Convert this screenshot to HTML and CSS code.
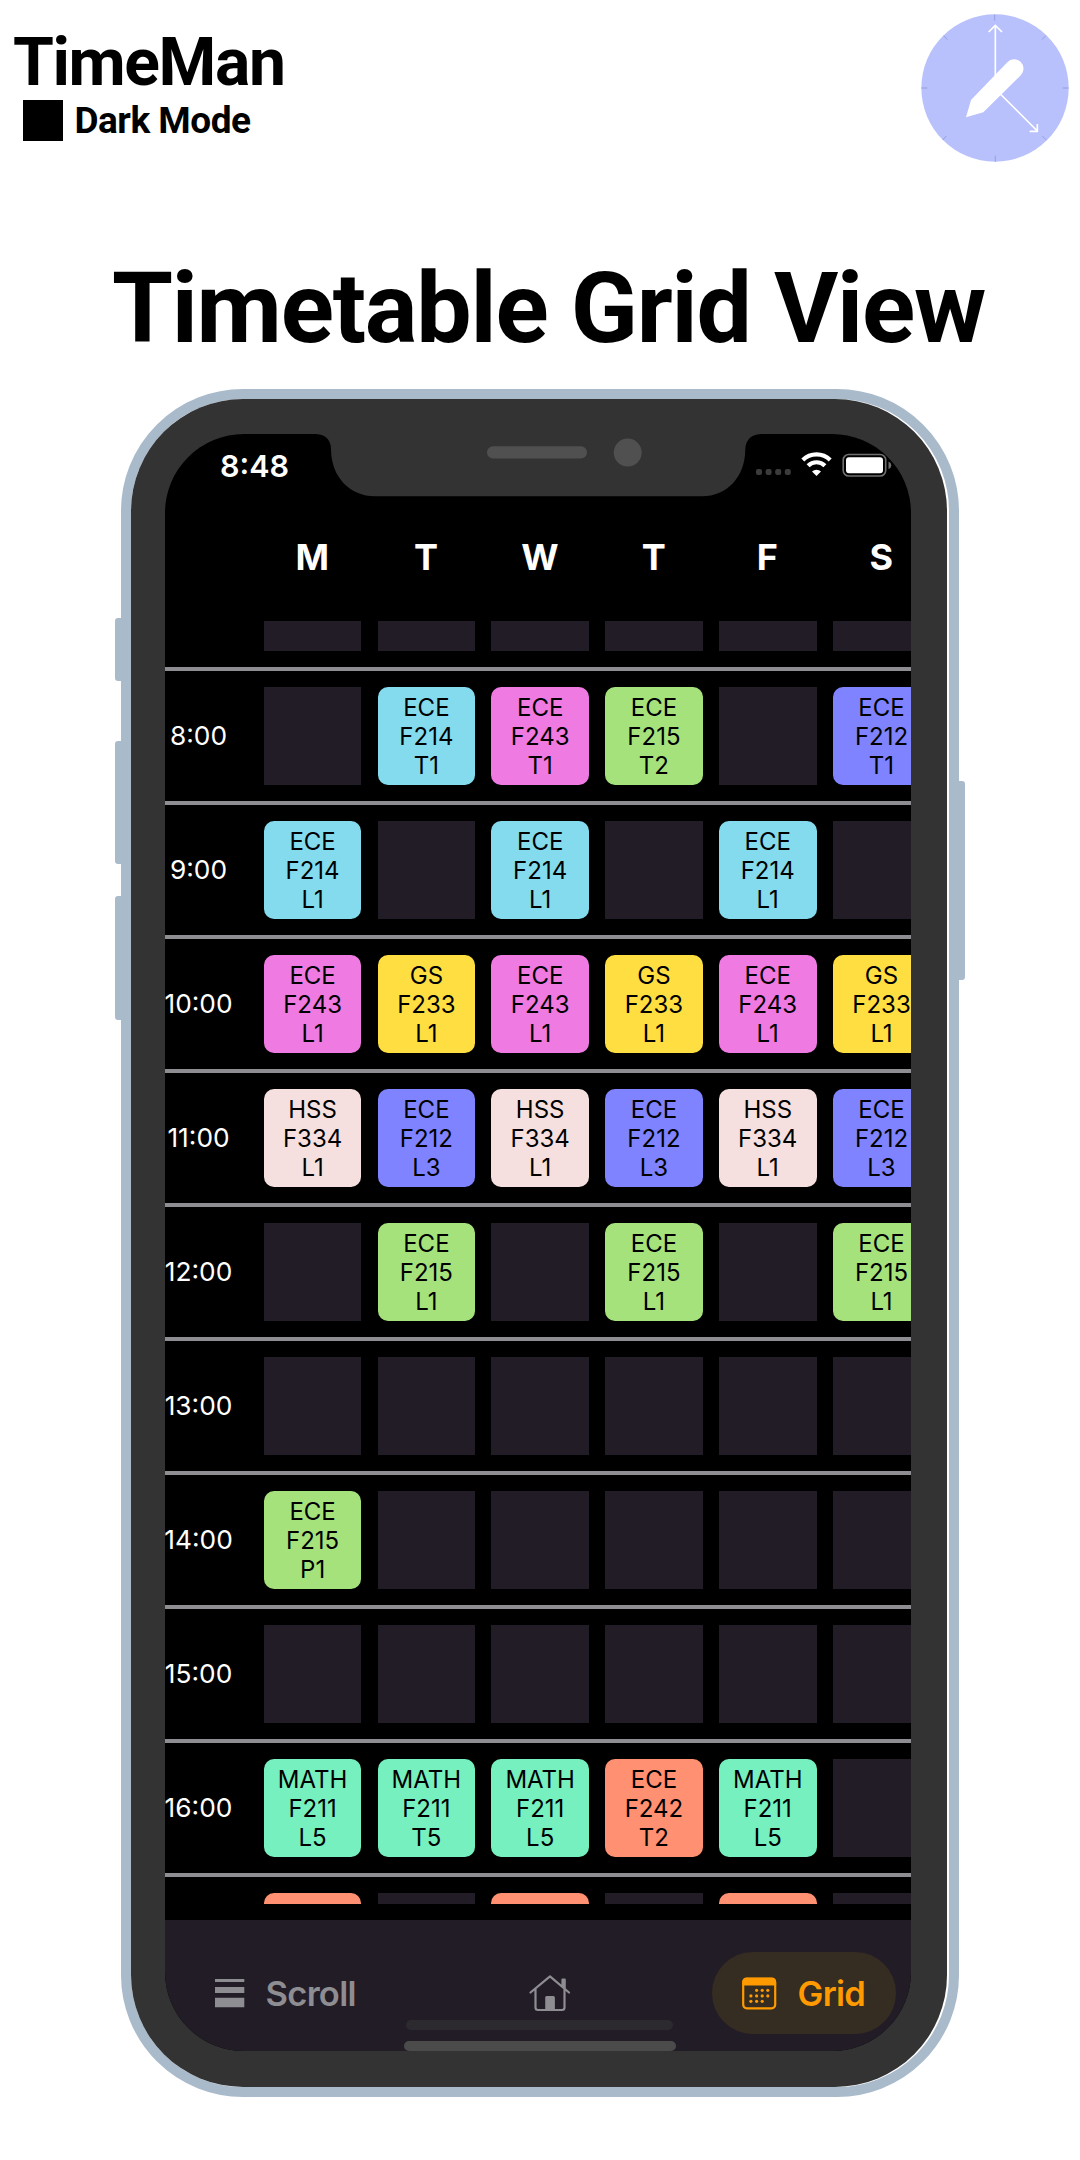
FILE: index.html
```html
<!DOCTYPE html>
<html lang="en">
<head>
<meta charset="utf-8">
<title>TimeMan</title>
<link rel="stylesheet" href="styles.css">
</head>
<body>
<header class="top">
  <div class="brand">
    <div class="brand-name">TimeMan</div>
    <div class="mode"><span class="swatch"></span><span class="mode-name">Dark Mode</span></div>
  </div>
  <svg class="logo" viewBox="0 0 450 450">
    <circle cx="225" cy="225" r="221" fill="#b8c1fc"/>
    <path d="M224 5v18M226 428v18M4 225h18M428 225h18M71 68l11 12M377 68l-11 12M68 381l11-12M379 381l-12-12" stroke="#8f97dc" stroke-width="2.5" fill="none"/>
    <path d="M226 200V36M206 57l20-20 20 20M235 237L352 354M352 333v22h-23" stroke="#fff" stroke-width="5" fill="none"/>
    <path d="M262 148a26 26 0 0 1 41 38L190 298l-52 15 15-52z" fill="#fff"/>
  </svg>
</header>
<h1 class="title">Timetable Grid View</h1>
<main class="phone">
  <i class="key key-mute"></i><i class="key key-up"></i><i class="key key-down"></i><i class="key key-power"></i>
  <div class="bezel">
    <div class="screen">
      <div class="status">
        <span class="clock">8:48</span>
        <svg class="signals" width="136" height="26" viewBox="0 0 136 26">
          <g fill="#3b3b3b"><rect x="0" y="18" width="6" height="6" rx="2"/><rect x="9.6" y="18" width="6" height="6" rx="2"/><rect x="19.2" y="18" width="6" height="6" rx="2"/><rect x="28.8" y="18" width="6" height="6" rx="2"/></g>
          <g fill="none" stroke="#fff" stroke-width="4.200"><path d="M46.800 9a19.400 19.400 0 0 1 27.400 0"/><path d="M52.100 14.700a11.900 11.900 0 0 1 16.800 0"/></g>
          <path d="M60.500 25l-4.500-4.500a6.500 6.500 0 0 1 9 0z" fill="#fff"/>
          <rect x="87.200" y="3.500" width="42.500" height="21.500" rx="5.500" fill="none" stroke="#6f6f6f" stroke-width="1.600"/>
          <rect x="90" y="6.200" width="37" height="16" rx="3" fill="#fff"/>
          <path d="M132.500 10.500v7.600q2.800-1 2.800-3.800t-2.800-3.800z" fill="#6f6f6f"/>
        </svg>
      </div>
      <div class="days"><span>M</span><span>T</span><span>W</span><span>T</span><span>F</span><span>S</span></div>
      <div class="timetable" id="timetable"></div>
      <nav class="tabs">
        <div class="tab tab-scroll">
          <svg width="30" height="30" viewBox="0 0 30 30" fill="currentColor"><path d="M0 1h29.300v3H0zM0 9h29.300v6H0zM0 19.700h29.300v9.600H0z"/></svg>
          <span>Scroll</span>
        </div>
        <svg class="home" width="42" height="38" viewBox="0 0 42 38">
          <path d="M1.500 18.500L21 2.300l19 16.200M6.500 15v18.500q0 2.500 2.500 2.500h24q2.500 0 2.500-2.500V15M33.500 12V5.500h2.200V14" fill="none" stroke="currentColor" stroke-width="2.200" stroke-linecap="round" stroke-linejoin="round"/>
          <path d="M16.200 36V23.500q0-1.500 1.500-1.500h6.700q1.500 0 1.500 1.500V36z" fill="currentColor"/>
        </svg>
        <div class="tab tab-grid">
          <svg width="35" height="33" viewBox="0 0 35 33">
            <rect x="1.200" y="1.700" width="32" height="29.600" rx="3.500" fill="none" stroke="currentColor" stroke-width="2.200"/>
            <path d="M.3 8.500V5Q.3.700 4.500.700h25.400q4.200 0 4.200 4.300v3.500z" fill="currentColor"/>
            <g fill="currentColor"><circle cx="14.600" cy="13.300" r="1.600"/><circle cx="20.200" cy="13.300" r="1.600"/><circle cx="25.800" cy="13.300" r="1.600"/><circle cx="8.900" cy="18.900" r="1.600"/><circle cx="14.600" cy="18.900" r="1.600"/><circle cx="20.200" cy="18.900" r="1.600"/><circle cx="25.800" cy="18.900" r="1.600"/><circle cx="8.900" cy="24.300" r="1.600"/><circle cx="14.600" cy="24.300" r="1.600"/><circle cx="20.200" cy="24.300" r="1.600"/></g>
          </svg>
          <span>Grid</span>
        </div>
      </nav>
      <i class="indicator indicator-app"></i>
      <i class="indicator indicator-device"></i>
    </div>
    <svg class="notch" width="476" height="64" viewBox="0 0 476 64">
      <path d="M0 0H476V1H461Q446 2 445.300 16C445.300 44 427 63.300 402 63.300H75C50 63.300 31 44 31 16Q30.500 2 16 1H0z" fill="#333"/>
      <rect x="187" y="13.300" width="100" height="12.300" rx="6.150" fill="#505050"/>
      <circle cx="327.700" cy="19.600" r="14" fill="#505050"/>
    </svg>
  </div>
</main>
<script src="timetable.js"></script>
</body>
</html>
```
FILE: styles.css
```css
* { box-sizing: border-box; }

body {
  margin: 0;
  width: 1080px;
  height: 2160px;
  overflow: hidden;
  background: #fff;
  color: #000;
  font-family: Inter, "Liberation Sans", sans-serif;
}

.top {
  display: flex;
  justify-content: space-between;
  height: 241px;
  padding: 13px 10px 0 13px;
  font-family: Roboto, sans-serif;
  font-weight: 700;
}
.brand-name { height: 86px; line-height: 100px; font-size: 66px; letter-spacing: -1.4px; }
.mode { display: flex; align-items: center; gap: 11.5px; padding-left: 10px; height: 42px; }
.swatch { width: 40px; height: 41px; background: #000; }
.mode-name { padding-top: 2px; font-size: 37px; line-height: 42px; letter-spacing: -0.5px; }
.logo { width: 150px; height: 150px; flex: none; }

.title {
  margin: 0;
  height: 148px;
  padding-left: 17px;
  text-align: center;
  white-space: nowrap;
  font: 700 98.5px/136px Roboto, sans-serif;
  letter-spacing: -1.2px;
}

.phone {
  position: relative;
  width: 838px;
  height: 1708px;
  margin-left: 121px;
  border: 10px solid #a9bacb;
  border-radius: 122px;
}
.key { position: absolute; left: -16px; width: 8px; background: #a9bacb; border-radius: 3px 0 0 3px; }
.key-mute { top: 219px; height: 63px; }
.key-up { top: 342px; height: 123px; }
.key-down { top: 497px; height: 124px; }
.key-power { left: auto; right: -16px; top: 382px; height: 199px; border-radius: 0 3px 3px 0; }

.bezel {
  position: relative;
  width: 816px;
  height: 1688px;
  padding: 35px 35.7px 36px 33.5px;
  background: #333;
  border-radius: 112px;
}
.notch { position: absolute; left: 169px; top: 34px; }

.screen {
  position: relative;
  display: flex;
  flex-direction: column;
  height: 1617px;
  overflow: hidden;
  background: #000;
  border-radius: 79px;
}

.status {
  display: flex;
  justify-content: space-between;
  height: 62px;
  padding: 17px 19.3px 0 55.5px;
  color: #fff;
}
.clock { font-size: 30.5px; line-height: 28px; height: 28px; padding-top: 1px; font-weight: 600; }

.days, .cells {
  display: grid;
  grid-template-columns: repeat(6, 97.6px);
  column-gap: 16.2px;
}
.days {
  height: 125px;
  padding-left: 99px;
  text-align: center;
  color: #fff;
  font-size: 36px;
  line-height: 122px;
  font-weight: 700;
}

.timetable { height: 1283px; overflow: hidden; }
.row {
  display: flex;
  height: 134px;
  padding: 16px 0;
  border-top: 4px solid #8e8d92;
}
.row-first { height: 46px; padding: 0 0 16px; border: 0; }
.row-first .cell { height: 30px; }
.row-last { height: 32px; padding-bottom: 0; overflow: hidden; }
.hour {
  display: flex;
  align-items: center;
  justify-content: center;
  flex: none;
  width: 68px;
  padding-bottom: 1px;
  margin-right: 31.3px;
  color: #fff;
  font-size: 26.3px;
}
.cell {
  height: 98px;
  padding-top: 6px;
  background: #221c27;
  text-align: center;
  font-size: 24px;
  line-height: 29.1px;
}
.cell span { display: block; }
.course { border-radius: 10px; }
.sky { background: #84dbee; }
.pink { background: #ef7ae2; }
.green { background: #a6e27c; }
.indigo { background: #7f83ff; }
.yellow { background: #ffde42; }
.blush { background: #f5e0df; }
.mint { background: #76f0be; }
.coral { background: #ff9071; }

.tabs {
  display: flex;
  align-items: center;
  justify-content: space-between;
  margin-top: 16px;
  height: 131px;
  padding: 15px 15.3px 0 50px;
  background: #221c27;
  color: #8e8d92;
  font-size: 34.5px;
  font-weight: 600;
  letter-spacing: -0.7px;
}
.tab { display: flex; align-items: center; gap: 21px; }
.tab-scroll { width: 160px; }
.home { margin-left: 14px; }
.tab-grid { width: 184px; height: 82px; padding-left: 30px; gap: 20.5px; border-radius: 41px; background: #352c22; color: #ff9a00; }
.indicator { position: absolute; border-radius: 6px; }
.indicator-app { left: 241px; top: 1586px; width: 267px; height: 10px; background: #2c2a2f; }
.indicator-device { left: 239.500px; top: 1606.500px; width: 272px; height: 10.500px; background: #4b4b4b; }
```
FILE: timetable.js
```js
const E214 = ['sky', 'ECE', 'F214'];
const E243 = ['pink', 'ECE', 'F243'];
const E215 = ['green', 'ECE', 'F215'];
const E212 = ['indigo', 'ECE', 'F212'];
const G233 = ['yellow', 'GS', 'F233'];
const H334 = ['blush', 'HSS', 'F334'];
const M211 = ['mint', 'MATH', 'F211'];
const E242 = ['coral', 'ECE', 'F242'];

const rows = [
  ['', []],
  ['8:00', [0, [...E214, 'T1'], [...E243, 'T1'], [...E215, 'T2'], 0, [...E212, 'T1']]],
  ['9:00', [[...E214, 'L1'], 0, [...E214, 'L1'], 0, [...E214, 'L1'], 0]],
  ['10:00', [[...E243, 'L1'], [...G233, 'L1'], [...E243, 'L1'], [...G233, 'L1'], [...E243, 'L1'], [...G233, 'L1']]],
  ['11:00', [[...H334, 'L1'], [...E212, 'L3'], [...H334, 'L1'], [...E212, 'L3'], [...H334, 'L1'], [...E212, 'L3']]],
  ['12:00', [0, [...E215, 'L1'], 0, [...E215, 'L1'], 0, [...E215, 'L1']]],
  ['13:00', []],
  ['14:00', [[...E215, 'P1']]],
  ['15:00', []],
  ['16:00', [[...M211, 'L5'], [...M211, 'T5'], [...M211, 'L5'], [...E242, 'T2'], [...M211, 'L5'], 0]],
  ['', [['coral'], 0, ['coral'], 0, ['coral'], 0]]
];

const cell = c => c
  ? `<div class="cell course ${c[0]}">${c.slice(1).map(t => `<span>${t}</span>`).join('')}</div>`
  : '<div class="cell"></div>';

document.getElementById('timetable').innerHTML = rows.map(([hour, courses], i) => {
  const edge = i === 0 ? ' row-first' : i === rows.length - 1 ? ' row-last' : '';
  const cells = Array.from({ length: 6 }, (_, d) => cell(courses[d])).join('');
  return `<div class="row${edge}"><div class="hour">${hour}</div><div class="cells">${cells}</div></div>`;
}).join('');
```
